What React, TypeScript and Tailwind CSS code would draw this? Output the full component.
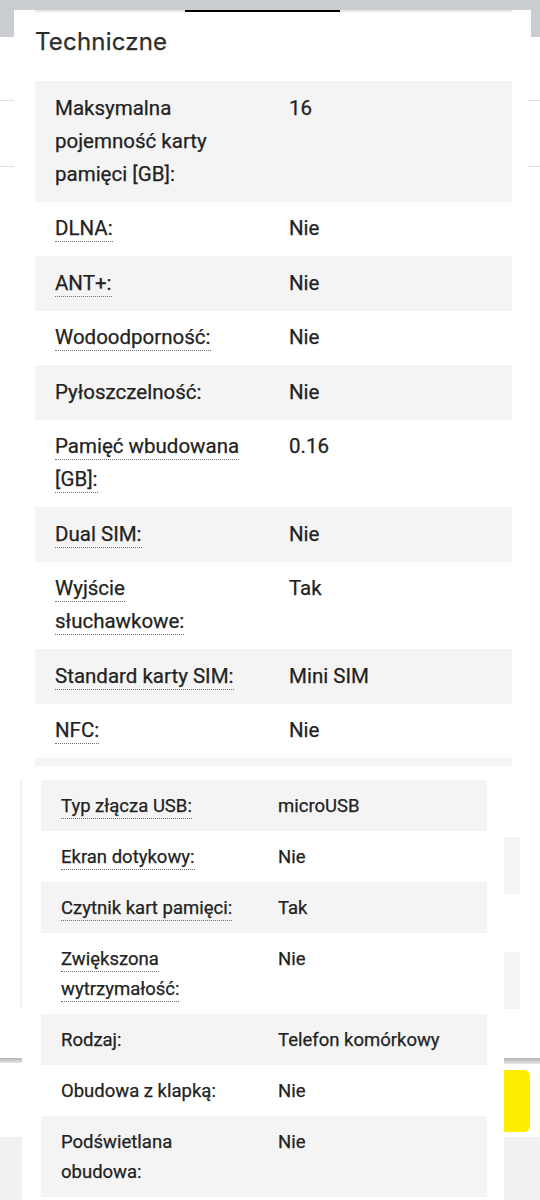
import React from "react";

type Spec = { label: string; value: string; tip: boolean };

const topRows: Spec[] = [
  { label: "Maksymalna pojemność karty pamięci [GB]:", value: "16", tip: false },
  { label: "DLNA:", value: "Nie", tip: true },
  { label: "ANT+:", value: "Nie", tip: true },
  { label: "Wodoodporność:", value: "Nie", tip: true },
  { label: "Pyłoszczelność:", value: "Nie", tip: false },
  { label: "Pamięć wbudowana [GB]:", value: "0.16", tip: true },
  { label: "Dual SIM:", value: "Nie", tip: true },
  { label: "Wyjście słuchawkowe:", value: "Tak", tip: true },
  { label: "Standard karty SIM:", value: "Mini SIM", tip: true },
  { label: "NFC:", value: "Nie", tip: true },
];

const lowerRows: Spec[] = [
  { label: "Typ złącza USB:", value: "microUSB", tip: true },
  { label: "Ekran dotykowy:", value: "Nie", tip: true },
  { label: "Czytnik kart pamięci:", value: "Tak", tip: true },
  { label: "Zwiększona wytrzymałość:", value: "Nie", tip: true },
  { label: "Rodzaj:", value: "Telefon komórkowy", tip: false },
  { label: "Obudowa z klapką:", value: "Nie", tip: false },
  { label: "Podświetlana obudowa:", value: "Nie", tip: false },
];

const Label = ({ spec }: { spec: Spec }) =>
  spec.tip ? (
    <span className="border-b border-dotted border-[#6f6f6f] pb-[1px]">{spec.label}</span>
  ) : (
    <span>{spec.label}</span>
  );

const TopTable = () => (
  <div className="flex flex-col">
    {topRows.map((r, i) => (
      <div key={i} className={`flex shrink-0 py-[10.75px] ${i % 2 === 0 ? "bg-[#f4f4f4]" : "bg-white"}`}>
        <div className="w-[234px] shrink-0 pl-[20px] pr-[24px]">
          <Label spec={r} />
        </div>
        <div className="pl-[20px]">{r.value}</div>
      </div>
    ))}
    {/* next row, cut by the edge of the capture */}
    <div className="h-[20px] shrink-0 bg-[#f4f4f4]" />
  </div>
);

const LowerTable = () => (
  <div className="flex flex-col">
    {lowerRows.map((r, i) => (
      <div key={i} className={`flex shrink-0 py-[10.5px] ${i % 2 === 0 ? "bg-[#f4f4f4]" : "bg-white"}`}>
        <div className="w-[217px] shrink-0 pl-[20px] pr-[20px]">
          <Label spec={r} />
        </div>
        <div className="pl-[20px]">{r.value}</div>
      </div>
    ))}
  </div>
);

export default function App() {
  return (
    <div className="w-[540px] h-[1200px] overflow-hidden bg-white text-[#222] font-['Roboto',sans-serif] [-webkit-text-stroke:0.25px_#222]">
      {/* upper capture */}
      <div className="flex h-[766px] overflow-hidden">
        <div className="w-[14px] shrink-0 flex flex-col">
          <div className="h-[37px] shrink-0 bg-[#c9ccd0]" />
          <div className="mt-[63px] h-px shrink-0 bg-[#e2e2e2]" />
          <div className="mt-[65px] h-px shrink-0 bg-[#e2e2e2]" />
        </div>
        <div className="w-[517px] shrink-0">
          <div className="h-[10px] bg-[#c9ccd0]" />
          <div className="pl-[21px] pr-[19px]">
            <div className="flex h-[2px] bg-[#e6e7e9]">
              <div className="ml-[150px] w-[155px] bg-black" />
            </div>
            <h2 className="pt-[15px] pb-[24px] text-[24px] leading-[30px] font-normal text-[#2f2f2f] font-['Inter',sans-serif] tracking-[0.2px]">
              Techniczne
            </h2>
            <div className="text-[20.5px] leading-[33px]">
              <TopTable />
            </div>
          </div>
        </div>
        <div className="flex-1 flex flex-col">
          <div className="h-[37px] shrink-0 bg-[#c9ccd0]" />
          <div className="mt-[63px] ml-[-3px] h-px shrink-0 bg-[#e2e2e2]" />
          <div className="mt-[65px] ml-[-3px] h-px shrink-0 bg-[#e2e2e2]" />
        </div>
      </div>

      {/* lower capture */}
      <div className="flex h-[434px]">
        <div className="w-[22px] shrink-0 flex flex-col">
          <div className="mt-[14px] ml-[20px] w-[2px] h-[228px] shrink-0 bg-[#f2f2f2]" />
          <div className="mt-[50px] h-[5px] shrink-0 bg-gradient-to-b from-[#b4b4b4] to-[#e6e6e6]" />
          <div className="mt-[74px] flex-1 bg-[#f1f1f1]" />
        </div>
        <div className="w-[482px] shrink-0 pt-[14px] pl-[19px] pr-[17px] text-[18.5px] leading-[30px]">
          <LowerTable />
        </div>
        <div className="flex-1 flex flex-col">
          <div className="mt-[71px] w-[16px] h-[57px] shrink-0 bg-[#f4f4f4]" />
          <div className="mt-[58px] w-[16px] h-[57px] shrink-0 bg-[#f4f4f4]" />
          <div className="mt-[49px] h-[6px] shrink-0 bg-gradient-to-b from-[#b4b4b4] to-[#e6e6e6]" />
          <div className="mt-[6px] w-[26px] h-[62px] shrink-0 rounded-r-[6px] bg-[#ffed00]" />
          <div className="mt-[5px] flex-1 bg-[#f1f1f1]" />
        </div>
      </div>
    </div>
  );
}
